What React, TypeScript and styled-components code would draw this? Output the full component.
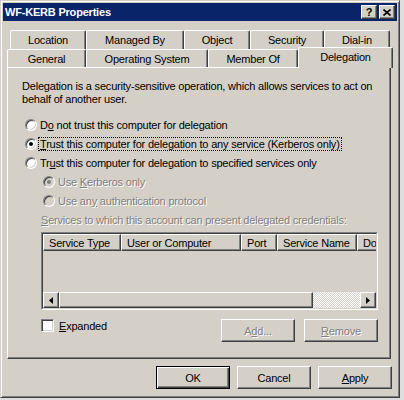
import styled, { createGlobalStyle, css } from "styled-components";

const face = "#d4d0c8";

const GlobalStyle = createGlobalStyle`
  html, body {
    margin: 0;
    padding: 0;
    background: #dedede;
  }
  body {
    width: 404px;
    height: 400px;
    overflow: hidden;
    font-family: "Liberation Sans", Arial, sans-serif;
    font-size: 11px;
    letter-spacing: -0.2px;
    color: #000;
  }
`;

// classic 3d edges
const raised = css`
  border: 1px solid;
  border-color: #fff #404040 #404040 #fff;
  box-shadow: inset -1px -1px #808080, inset 1px 1px ${face};
`;

const sunken = css`
  border: 1px solid;
  border-color: #808080 #fff #fff #808080;
  box-shadow: inset 1px 1px #404040, inset -1px -1px ${face};
`;

const disabledText = css`
  color: #808080;
  text-shadow: 1px 1px 0 #fff;
`;

const Window = styled.div`
  box-sizing: border-box;
  width: 400px;
  height: 398px;
  background: ${face};
  border: 1px solid;
  border-color: ${face} #404040 #404040 ${face};
  box-shadow: inset 1px 1px #fff, inset -1px -1px #808080;
  padding: 2px;
  display: flex;
  flex-direction: column;
`;

const TitleBar = styled.div`
  height: 18px;
  background: #0a246a;
  display: flex;
  align-items: center;
  padding: 0 2px 0 2px;
`;

const Title = styled.div`
  flex: 1;
  color: #fff;
  font-weight: bold;
`;

const CaptionButtons = styled.div`
  display: flex;
  gap: 2px;
`;

const CaptionButton = styled.div`
  box-sizing: border-box;
  width: 16px;
  height: 14px;
  background: ${face};
  ${raised};
  display: flex;
  align-items: center;
  justify-content: center;
  font-weight: bold;
  font-size: 11px;
  line-height: 1;
`;

const Body = styled.div`
  display: flex;
  flex-direction: column;
  padding: 9px 6px 0 4px;
`;

const TabStrip = styled.div`
  display: flex;
  flex-direction: column;
`;

const TabRow = styled.div<{ $indent: number; $h: number }>`
  display: flex;
  height: ${(p) => p.$h}px;
  margin-left: ${(p) => p.$indent}px;
`;

const Tab = styled.div<{ $w: number; $selected?: boolean }>`
  box-sizing: border-box;
  flex: none;
  width: ${(p) => p.$w}px;
  height: 100%;
  background: ${face};
  border-left: 1px solid #fff;
  border-top: 1px solid #fff;
  border-right: 1px solid #404040;
  box-shadow: inset -1px 0 #808080;
  border-top-left-radius: 2px;
  border-top-right-radius: 2px;
  display: flex;
  align-items: center;
  justify-content: center;
  white-space: nowrap;

  ${(p) =>
    p.$selected &&
    css`
      position: relative;
      z-index: 1;
      height: calc(100% + 3px);
      margin-top: -2px;
      padding-bottom: 2px;
    `}
`;

const Panel = styled.div`
  box-sizing: border-box;
  width: 384px;
  height: 292px;
  border: 1px solid;
  border-color: #fff #404040 #404040 #fff;
  box-shadow: inset -1px -1px #808080, inset 1px 1px ${face};
  padding: 12px 0 0 14px;
  display: flex;
  flex-direction: column;
`;

const Description = styled.div`
  line-height: 13px;
`;

const Options = styled.div`
  margin-top: 9px;
  display: flex;
  flex-direction: column;
`;

const OptionRow = styled.div<{ $indent: number; $disabled?: boolean }>`
  height: 19px;
  display: flex;
  align-items: center;
  gap: 3px;
  margin-left: ${(p) => p.$indent}px;
  white-space: nowrap;
  ${(p) => p.$disabled && disabledText};
`;

const RadioCircle = styled.span<{ $checked?: boolean; $disabled?: boolean }>`
  box-sizing: border-box;
  flex: none;
  width: 12px;
  height: 12px;
  border-radius: 50%;
  ${sunken};
  background: ${(p) => (p.$disabled ? face : "#fff")};
  display: flex;
  align-items: center;
  justify-content: center;

  &::after {
    content: "";
    display: ${(p) => (p.$checked ? "block" : "none")};
    width: 4px;
    height: 4px;
    border-radius: 50%;
    background: ${(p) => (p.$disabled ? "#808080" : "#000")};
  }
`;

const FocusLabel = styled.span`
  outline: 1px dotted #000;
  padding: 0 1px;
  margin-left: -1px;
`;

const Services = styled.div`
  margin-left: 19px;
  width: 337px;
  display: flex;
  flex-direction: column;
`;

const ServicesLabel = styled.div`
  height: 19px;
  display: flex;
  align-items: center;
  white-space: nowrap;
  ${disabledText};
`;

const ListFrame = styled.div`
  box-sizing: border-box;
  margin-top: 3px;
  height: 78px;
  border: 1px solid;
  border-color: #808080 #fff #fff #808080;
`;

const ListInner = styled.div`
  box-sizing: border-box;
  height: 100%;
  border: 1px solid;
  border-color: #404040 ${face} ${face} #404040;
  display: flex;
  flex-direction: column;
  overflow: hidden;
`;

const Header = styled.div`
  display: flex;
  height: 17px;
  flex: none;
  overflow: hidden;
`;

const HeaderCell = styled.div<{ $w: number }>`
  box-sizing: border-box;
  flex: none;
  width: ${(p) => p.$w}px;
  height: 100%;
  ${raised};
  background: ${face};
  padding-left: 5px;
  display: flex;
  align-items: center;
  white-space: nowrap;
  overflow: hidden;
`;

const ListBody = styled.div`
  flex: 1;
  background: ${face};
`;

const ScrollBar = styled.div`
  display: flex;
  height: 16px;
  flex: none;
`;

const ScrollArrow = styled.div`
  box-sizing: border-box;
  flex: none;
  width: 16px;
  height: 16px;
  background: ${face};
  ${raised};
  display: flex;
  align-items: center;
  justify-content: center;
`;

const ScrollThumb = styled.div<{ $w: number }>`
  box-sizing: border-box;
  flex: none;
  width: ${(p) => p.$w}px;
  height: 16px;
  background: ${face};
  ${raised};
`;

const ScrollTrack = styled.div`
  flex: 1;
  background-image: repeating-conic-gradient(#fff 0 25%, ${face} 0 50%);
  background-size: 2px 2px;
`;

const ActionRow = styled.div`
  margin-top: 9px;
  display: flex;
  align-items: flex-start;
`;

const CheckRow = styled.div`
  flex: 1;
  height: 13px;
  display: flex;
  align-items: center;
  gap: 5px;
`;

const CheckBox = styled.span`
  box-sizing: border-box;
  width: 13px;
  height: 13px;
  flex: none;
  background: #fff;
  ${sunken};
`;

const Button = styled.button<{ $default?: boolean; $gap?: number }>`
  box-sizing: border-box;
  width: 74px;
  height: 23px;
  margin: 0 0 0 ${(p) => p.$gap ?? 0}px;
  padding: 0;
  font: inherit;
  letter-spacing: inherit;
  color: #000;
  background: ${face};
  ${raised};
  display: flex;
  align-items: center;
  justify-content: center;

  ${(p) =>
    p.$default &&
    css`
      border-color: #000;
      box-shadow: inset 1px 1px #fff, inset -1px -1px #404040,
        inset -2px -2px #808080;
    `}

  &:disabled {
    ${disabledText};
  }
`;

const Footer = styled.div`
  margin-top: 7px;
  margin-right: -1px;
  display: flex;
  justify-content: flex-end;
  gap: 7px;
`;

const backTabs = [
  { label: "Location", w: 76 },
  { label: "Managed By", w: 98 },
  { label: "Object", w: 66 },
  { label: "Security", w: 74 },
  { label: "Dial-in", w: 66 },
];

const frontTabs = [
  { label: "General", w: 79 },
  { label: "Operating System", w: 122 },
  { label: "Member Of", w: 90 },
  { label: "Delegation", w: 95, selected: true },
];

const columns = [
  { label: "Service Type", w: 78 },
  { label: "User or Computer", w: 120 },
  { label: "Port", w: 36 },
  { label: "Service Name", w: 80 },
  { label: "Domain", w: 80 },
];

const Arrow = ({ dir }: { dir: "left" | "right" }) => (
  <svg width="4" height="7" viewBox="0 0 4 7">
    <polygon points={dir === "left" ? "4,0 4,7 0,3.5" : "0,0 0,7 4,3.5"} fill="#000" />
  </svg>
);

export default function App() {
  return (
    <>
      <GlobalStyle />
      <Window>
        <TitleBar>
          <Title>WF-KERB Properties</Title>
          <CaptionButtons>
            <CaptionButton>?</CaptionButton>
            <CaptionButton>
              <svg width="8" height="7" viewBox="0 0 8 7">
                <path d="M0.5 0.5 L7.5 6.5 M7.5 0.5 L0.5 6.5" stroke="#000" strokeWidth="1.6" />
              </svg>
            </CaptionButton>
          </CaptionButtons>
        </TitleBar>

        <Body>
          <TabStrip>
            <TabRow $indent={3} $h={19}>
              {backTabs.map((t) => (
                <Tab key={t.label} $w={t.w}>
                  {t.label}
                </Tab>
              ))}
            </TabRow>
            <TabRow $indent={0} $h={18}>
              {frontTabs.map((t) => (
                <Tab key={t.label} $w={t.w} $selected={t.selected}>
                  {t.label}
                </Tab>
              ))}
            </TabRow>
          </TabStrip>

          <Panel>
            <Description>
              Delegation is a security-sensitive operation, which allows services to act on
              <br />
              behalf of another user.
            </Description>

            <Options>
              <OptionRow $indent={3}>
                <RadioCircle />
                <span>
                  D<u>o</u> not trust this computer for delegation
                </span>
              </OptionRow>
              <OptionRow $indent={3}>
                <RadioCircle $checked />
                <FocusLabel>
                  <u>T</u>rust this computer for delegation to any service (Kerberos only)
                </FocusLabel>
              </OptionRow>
              <OptionRow $indent={3}>
                <RadioCircle />
                <span>
                  Tr<u>u</u>st this computer for delegation to specified services only
                </span>
              </OptionRow>
              <OptionRow $indent={21} $disabled>
                <RadioCircle $checked $disabled />
                <span>
                  Use <u>K</u>erberos only
                </span>
              </OptionRow>
              <OptionRow $indent={21} $disabled>
                <RadioCircle $disabled />
                <span>
                  Use an<u>y</u> authentication protocol
                </span>
              </OptionRow>
            </Options>

            <Services>
              <ServicesLabel>
                <span>
                  <u>S</u>ervices to which this account can present delegated credentials:
                </span>
              </ServicesLabel>
              <ListFrame>
                <ListInner>
                  <Header>
                    {columns.map((c) => (
                      <HeaderCell key={c.label} $w={c.w}>
                        {c.label}
                      </HeaderCell>
                    ))}
                  </Header>
                  <ListBody />
                  <ScrollBar>
                    <ScrollArrow>
                      <Arrow dir="left" />
                    </ScrollArrow>
                    <ScrollThumb $w={254} />
                    <ScrollTrack />
                    <ScrollArrow>
                      <Arrow dir="right" />
                    </ScrollArrow>
                  </ScrollBar>
                </ListInner>
              </ListFrame>

              <ActionRow>
                <CheckRow>
                  <CheckBox />
                  <span>
                    <u>E</u>xpanded
                  </span>
                </CheckRow>
                <Button disabled>
                  A<u>d</u>d...
                </Button>
                <Button disabled $gap={9}>
                  <u>R</u>emove
                </Button>
              </ActionRow>
            </Services>
          </Panel>

          <Footer>
            <Button $default>OK</Button>
            <Button>Cancel</Button>
            <Button>
              <u>A</u>pply
            </Button>
          </Footer>
        </Body>
      </Window>
    </>
  );
}
